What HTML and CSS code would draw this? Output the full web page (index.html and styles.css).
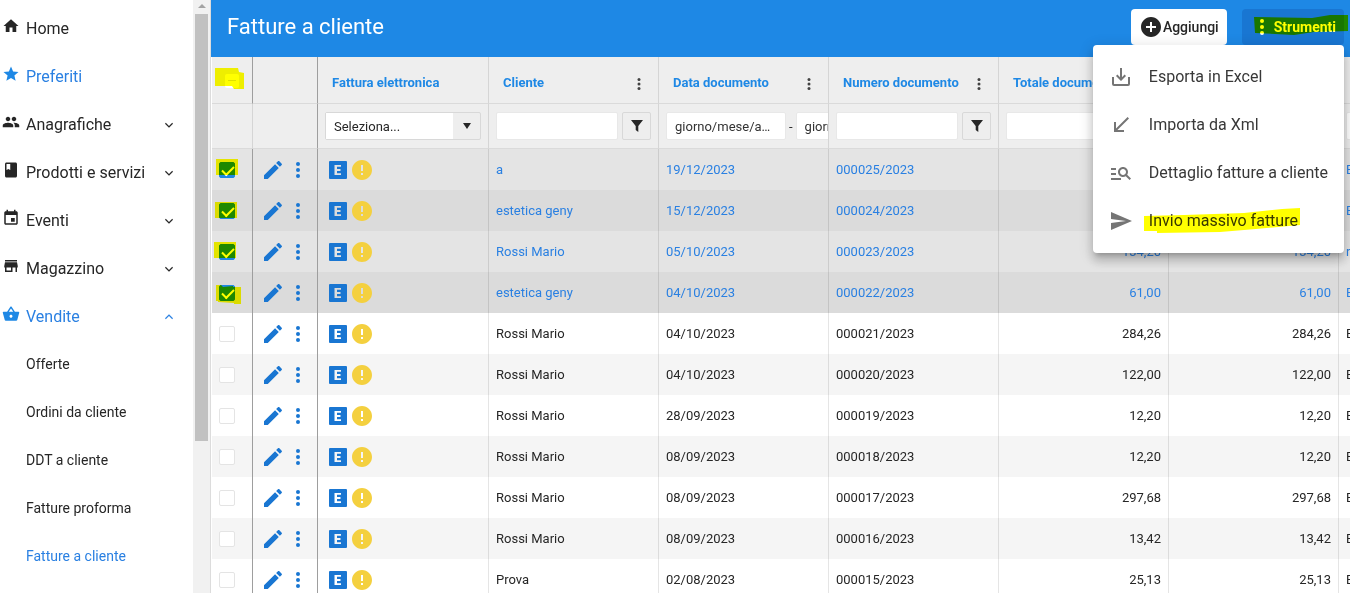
FILE: index.html
```html
<!DOCTYPE html>
<html lang="it">
<head>
<meta charset="utf-8">
<meta name="viewport" content="width=device-width, initial-scale=1">
<title>Fatture a cliente</title>
<link rel="stylesheet" href="styles.css">
</head>
<body>
<svg class="sprite" aria-hidden="true">
  <symbol id="home" viewBox="0 0 24 24"><path d="M10 20v-6h4v6h5v-8h3L12 3 2 12h3v8z"/></symbol>
  <symbol id="star" viewBox="0 0 24 24"><path d="M12 17.27 18.18 21l-1.64-7.03L22 9.24l-7.19-.61L12 2 9.19 8.63 2 9.24l5.46 4.73L5.82 21z"/></symbol>
  <symbol id="people" viewBox="0 0 24 24"><path d="M16 11c1.66 0 2.99-1.34 2.99-3S17.66 5 16 5s-3 1.34-3 3 1.34 3 3 3zm-8 0c1.66 0 2.99-1.34 2.99-3S9.66 5 8 5 5 6.340 5 8s1.340 3 3 3zm0 2c-2.330 0-7 1.170-7 3.500V19h14v-2.500c0-2.330-4.670-3.500-7-3.500zm8 0c-.290 0-.620.020-.970.050 1.160.840 1.970 1.970 1.970 3.450V19h6v-2.500c0-2.330-4.670-3.500-7-3.500z"/></symbol>
  <symbol id="book" viewBox="0 0 24 24"><path d="M18 2H6c-1.100 0-2 .9-2 2v16c0 1.100.9 2 2 2h12c1.100 0 2-.9 2-2V4c0-1.100-.9-2-2-2zM6 4h5v8l-2.500-1.500L6 12V4z"/></symbol>
  <symbol id="event" viewBox="0 0 24 24"><path d="M17 12h-5v5h5v-5zM16 1v2H8V1H6v2H5c-1.110 0-1.990.9-1.990 2L3 19c0 1.100.890 2 2 2h14c1.100 0 2-.9 2-2V5c0-1.100-.9-2-2-2h-1V1h-2zm3 18H5V8h14v11z"/></symbol>
  <symbol id="store" viewBox="0 0 24 24"><path d="M20 4H4v2h16V4zm1 10v-2l-1-5H4l-1 5v2h1v6h10v-6h4v6h2v-6h1zm-9 4H6v-4h6v4z"/></symbol>
  <symbol id="basket" viewBox="0 0 24 24"><path d="M17.210 9l-4.380-6.560c-.190-.280-.510-.420-.830-.420-.320 0-.640.140-.830.430L6.790 9H2c-.550 0-1 .450-1 1 0 .090.010.180.040.270l2.540 9.270c.230.840 1 1.460 1.920 1.460h13c.920 0 1.690-.620 1.930-1.460l2.540-9.270L23 10c0-.550-.450-1-1-1h-4.790zM9 9l3-4.400L15 9H9zm3 8c-1.100 0-2-.9-2-2s.9-2 2-2 2 .9 2 2-.9 2-2 2z"/></symbol>
  <symbol id="down" viewBox="0 0 24 24"><path d="M16.800 8.800 12 13.600 7.200 8.800 6 10l6 6 6-6z"/></symbol>
  <symbol id="up" viewBox="0 0 24 24"><path d="m12 8-6 6 1.200 1.200L12 10.400l4.800 4.800L18 14z"/></symbol>
  <symbol id="edit" viewBox="0 0 24 24"><path d="M3 17.250V21h3.750L17.810 9.940l-3.750-3.750L3 17.250zM20.710 7.040c.390-.390.390-1.020 0-1.410l-2.340-2.340c-.390-.390-1.020-.390-1.410 0l-1.830 1.830 3.750 3.750 1.830-1.830z"/></symbol>
  <symbol id="more" viewBox="0 0 24 24"><circle cx="12" cy="6" r="2"/><circle cx="12" cy="12" r="2"/><circle cx="12" cy="18" r="2"/></symbol>
  <symbol id="einv" viewBox="0 0 24 24"><path fill-rule="evenodd" d="M4 3h16a1 1 0 0 1 1 1v16a1 1 0 0 1-1 1H4a1 1 0 0 1-1-1V4a1 1 0 0 1 1-1zm4.500 4v10H15v-1.800h-4v-2.300h3.500v-1.800H11V8.800h4V7z"/></symbol>
  <symbol id="warn" viewBox="0 0 24 24"><path d="M12 2C6.480 2 2 6.480 2 12s4.480 10 10 10 10-4.480 10-10S17.520 2 12 2zm1 15h-2v-2h2v2zm0-4h-2V7h2v6z"/></symbol>
  <symbol id="add" viewBox="0 0 24 24"><path d="M12 2C6.480 2 2 6.480 2 12s4.480 10 10 10 10-4.480 10-10S17.520 2 12 2zm5 11h-4v4h-2v-4H7v-2h4V7h2v4h4v2z"/></symbol>
  <symbol id="funnel" viewBox="0 0 16 16"><path d="M2 2h12L9.300 8V14L6.700 12V8z"/></symbol>
  <symbol id="export" viewBox="0 0 24 24"><path d="M11 3h2v9.200l2.600-2.600L17 11l-5 5-5-5 1.400-1.400 2.600 2.600zM3 12h2v7h14v-7h2v7a2 2 0 0 1-2 2H5a2 2 0 0 1-2-2z"/></symbol>
  <symbol id="import" viewBox="0 0 24 24"><path d="M20 5.410 18.590 4 7 15.590V9H5v10h10v-2H8.410z"/></symbol>
  <symbol id="detail" viewBox="0 0 24 24"><path d="M7 9H2V7h5v2zm0 3H2v2h5v-2zm13.590 7-3.830-3.830c-.8.520-1.740.830-2.760.830-2.760 0-5-2.240-5-5s2.240-5 5-5 5 2.240 5 5c0 1.020-.310 1.960-.830 2.750L22 17.590 20.590 19zM17 11c0-1.650-1.350-3-3-3s-3 1.350-3 3 1.350 3 3 3 3-1.350 3-3zM2 19h10v-2H2v2z"/></symbol>
  <symbol id="send" viewBox="0 0 24 24"><path d="M2.010 21 23 12 2.010 3 2 10l15 2-15 2z"/></symbol>
</svg>

<div class="app">
  <nav class="sidebar" aria-label="Menu principale">
    <div class="nav-list">
      <a class="nav-item" href="#"><svg class="nav-icon"><use href="#home"/></svg><span>Home</span></a>
      <a class="nav-item active" href="#"><svg class="nav-icon"><use href="#star"/></svg><span>Preferiti</span></a>
      <a class="nav-item" href="#"><svg class="nav-icon"><use href="#people"/></svg><span>Anagrafiche</span><svg class="chevron"><use href="#down"/></svg></a>
      <a class="nav-item" href="#"><svg class="nav-icon"><use href="#book"/></svg><span>Prodotti e servizi</span><svg class="chevron"><use href="#down"/></svg></a>
      <a class="nav-item" href="#"><svg class="nav-icon"><use href="#event"/></svg><span>Eventi</span><svg class="chevron"><use href="#down"/></svg></a>
      <a class="nav-item" href="#"><svg class="nav-icon"><use href="#store"/></svg><span>Magazzino</span><svg class="chevron"><use href="#down"/></svg></a>
      <a class="nav-item active" href="#"><svg class="nav-icon"><use href="#basket"/></svg><span>Vendite</span><svg class="chevron"><use href="#up"/></svg></a>
      <a class="nav-item sub" href="#">Offerte</a>
      <a class="nav-item sub" href="#">Ordini da cliente</a>
      <a class="nav-item sub" href="#">DDT a cliente</a>
      <a class="nav-item sub" href="#">Fatture proforma</a>
      <a class="nav-item sub active" href="#">Fatture a cliente</a>
    </div>
    <div class="scroll-track" aria-hidden="true"><div class="scroll-arrow"></div><div class="scroll-thumb"></div></div>
  </nav>

  <main class="main">
    <header class="topbar">
      <h1>Fatture a cliente</h1>
      <button class="btn btn-add" type="button"><svg class="icon"><use href="#add"/></svg>Aggiungi</button>
      <div class="tools">
        <button class="btn btn-tools" type="button" aria-expanded="true"><svg class="icon"><use href="#more"/></svg>Strumenti</button>
        <svg class="mark mark-tools" viewBox="0 0 94 20"><path d="M0 2 58 3 76 0H94V16L60 17 40 20 1 18z"/></svg>
        <div class="menu" role="menu">
          <button class="menu-item" type="button" role="menuitem"><svg class="icon"><use href="#export"/></svg>Esporta in Excel</button>
          <button class="menu-item" type="button" role="menuitem"><svg class="icon"><use href="#import"/></svg>Importa da Xml</button>
          <button class="menu-item" type="button" role="menuitem"><svg class="icon"><use href="#detail"/></svg>Dettaglio fatture a cliente</button>
          <button class="menu-item" type="button" role="menuitem"><svg class="icon"><use href="#send"/></svg>Invio massivo fatture<svg class="mark mark-send" viewBox="0 0 156 25"><path d="M0 8 40 7 100 5 138 1 156 0V17L112 21 76 24 13 25V23H0z"/></svg></button>
        </div>
      </div>
    </header>

    <div class="grid-wrap">
      <table class="grid">
        <colgroup><col class="c-check"><col class="c-actions"><col class="c-einv"><col class="c-data"><col class="c-data"><col class="c-data"><col class="c-data"><col class="c-data"><col class="c-data"></colgroup>
        <thead>
          <tr class="titles">
            <th class="strong"><span class="check-all"><input type="checkbox" class="check partial" aria-label="Seleziona tutto"><svg class="mark mark-all" viewBox="0 0 29 21"><path d="M0 0H23L24 4 29 5V21H19L17 18H0z"/></svg></span></th>
            <th class="strong"></th>
            <th><div class="head">Fattura elettronica</div></th>
            <th><div class="head">Cliente<button class="head-menu" type="button" aria-label="Opzioni Cliente"><svg><use href="#more"/></svg></button></div></th>
            <th><div class="head">Data documento<button class="head-menu" type="button" aria-label="Opzioni Data documento"><svg><use href="#more"/></svg></button></div></th>
            <th><div class="head">Numero documento<button class="head-menu" type="button" aria-label="Opzioni Numero documento"><svg><use href="#more"/></svg></button></div></th>
            <th><div class="head">Totale documento</div></th>
            <th></th>
            <th></th>
          </tr>
          <tr class="filters">
            <td></td>
            <td class="strong"></td>
            <td><div class="select-box"><select aria-label="Fattura elettronica"><option>Seleziona...</option></select><span class="arrow"></span></div></td>
            <td><div class="filter"><input type="text" aria-label="Cliente"><button type="button" aria-label="Filtra Cliente"><svg><use href="#funnel"/></svg></button></div></td>
            <td><div class="filter dates"><input type="text" placeholder="giorno/mese/anno" aria-label="Dal"><span>-</span><input type="text" placeholder="giorno/mese/anno" aria-label="Al"></div></td>
            <td><div class="filter"><input type="text" aria-label="Numero documento"><button type="button" aria-label="Filtra Numero documento"><svg><use href="#funnel"/></svg></button></div></td>
            <td><div class="filter"><input type="text" aria-label="Totale documento"></div></td>
            <td></td>
            <td><div class="filter"><input type="text" aria-label="Filtro"></div></td>
          </tr>
        </thead>
        <tbody>
          <tr class="selected"><td><span class="check-cell"><input type="checkbox" class="check" checked aria-label="Seleziona 000025/2023"><svg class="mark mark-row" viewBox="0 0 28 24"><path d="M3 3H25V19H3z"/></svg></span></td><td><div class="icons"><svg><use href="#edit"/></svg><svg class="dots"><use href="#more"/></svg></div></td><td><div class="icons status"><svg><use href="#einv"/></svg><svg class="warn"><use href="#warn"/></svg></div></td><td>a</td><td>19/12/2023</td><td>000025/2023</td><td class="num"></td><td class="num"></td><td>E</td></tr>
          <tr class="selected"><td><span class="check-cell"><input type="checkbox" class="check" checked aria-label="Seleziona 000024/2023"><svg class="mark mark-row" viewBox="0 0 28 24"><path d="M2 5H24V21H2z"/></svg></span></td><td><div class="icons"><svg><use href="#edit"/></svg><svg class="dots"><use href="#more"/></svg></div></td><td><div class="icons status"><svg><use href="#einv"/></svg><svg class="warn"><use href="#warn"/></svg></div></td><td>estetica geny</td><td>15/12/2023</td><td>000024/2023</td><td class="num"></td><td class="num"></td><td>E</td></tr>
          <tr class="selected"><td><span class="check-cell"><input type="checkbox" class="check" checked aria-label="Seleziona 000023/2023"><svg class="mark mark-row" viewBox="0 0 28 24"><path d="M1 4H23V20H1z"/></svg></span></td><td><div class="icons"><svg><use href="#edit"/></svg><svg class="dots"><use href="#more"/></svg></div></td><td><div class="icons status"><svg><use href="#einv"/></svg><svg class="warn"><use href="#warn"/></svg></div></td><td>Rossi Mario</td><td>05/10/2023</td><td>000023/2023</td><td class="num">134,20</td><td class="num">134,20</td><td>r</td></tr>
          <tr class="selected"><td><span class="check-cell"><input type="checkbox" class="check" checked aria-label="Seleziona 000022/2023"><svg class="mark mark-row" viewBox="0 0 28 24"><path d="M3 6H8L10 8 20 7V8H28V25H21V24L5 23V22H3z"/></svg></span></td><td><div class="icons"><svg><use href="#edit"/></svg><svg class="dots"><use href="#more"/></svg></div></td><td><div class="icons status"><svg><use href="#einv"/></svg><svg class="warn"><use href="#warn"/></svg></div></td><td>estetica geny</td><td>04/10/2023</td><td>000022/2023</td><td class="num">61,00</td><td class="num">61,00</td><td>E</td></tr>
          <tr><td><span class="check-cell"><input type="checkbox" class="check" aria-label="Seleziona 000021/2023"></span></td><td><div class="icons"><svg><use href="#edit"/></svg><svg class="dots"><use href="#more"/></svg></div></td><td><div class="icons status"><svg><use href="#einv"/></svg><svg class="warn"><use href="#warn"/></svg></div></td><td>Rossi Mario</td><td>04/10/2023</td><td>000021/2023</td><td class="num">284,26</td><td class="num">284,26</td><td>E</td></tr>
          <tr><td><span class="check-cell"><input type="checkbox" class="check" aria-label="Seleziona 000020/2023"></span></td><td><div class="icons"><svg><use href="#edit"/></svg><svg class="dots"><use href="#more"/></svg></div></td><td><div class="icons status"><svg><use href="#einv"/></svg><svg class="warn"><use href="#warn"/></svg></div></td><td>Rossi Mario</td><td>04/10/2023</td><td>000020/2023</td><td class="num">122,00</td><td class="num">122,00</td><td>E</td></tr>
          <tr><td><span class="check-cell"><input type="checkbox" class="check" aria-label="Seleziona 000019/2023"></span></td><td><div class="icons"><svg><use href="#edit"/></svg><svg class="dots"><use href="#more"/></svg></div></td><td><div class="icons status"><svg><use href="#einv"/></svg><svg class="warn"><use href="#warn"/></svg></div></td><td>Rossi Mario</td><td>28/09/2023</td><td>000019/2023</td><td class="num">12,20</td><td class="num">12,20</td><td>E</td></tr>
          <tr><td><span class="check-cell"><input type="checkbox" class="check" aria-label="Seleziona 000018/2023"></span></td><td><div class="icons"><svg><use href="#edit"/></svg><svg class="dots"><use href="#more"/></svg></div></td><td><div class="icons status"><svg><use href="#einv"/></svg><svg class="warn"><use href="#warn"/></svg></div></td><td>Rossi Mario</td><td>08/09/2023</td><td>000018/2023</td><td class="num">12,20</td><td class="num">12,20</td><td>E</td></tr>
          <tr><td><span class="check-cell"><input type="checkbox" class="check" aria-label="Seleziona 000017/2023"></span></td><td><div class="icons"><svg><use href="#edit"/></svg><svg class="dots"><use href="#more"/></svg></div></td><td><div class="icons status"><svg><use href="#einv"/></svg><svg class="warn"><use href="#warn"/></svg></div></td><td>Rossi Mario</td><td>08/09/2023</td><td>000017/2023</td><td class="num">297,68</td><td class="num">297,68</td><td>E</td></tr>
          <tr><td><span class="check-cell"><input type="checkbox" class="check" aria-label="Seleziona 000016/2023"></span></td><td><div class="icons"><svg><use href="#edit"/></svg><svg class="dots"><use href="#more"/></svg></div></td><td><div class="icons status"><svg><use href="#einv"/></svg><svg class="warn"><use href="#warn"/></svg></div></td><td>Rossi Mario</td><td>08/09/2023</td><td>000016/2023</td><td class="num">13,42</td><td class="num">13,42</td><td>E</td></tr>
          <tr><td><span class="check-cell"><input type="checkbox" class="check" aria-label="Seleziona 000015/2023"></span></td><td><div class="icons"><svg><use href="#edit"/></svg><svg class="dots"><use href="#more"/></svg></div></td><td><div class="icons status"><svg><use href="#einv"/></svg><svg class="warn"><use href="#warn"/></svg></div></td><td>Prova</td><td>02/08/2023</td><td>000015/2023</td><td class="num">25,13</td><td class="num">25,13</td><td>E</td></tr>
        </tbody>
      </table>
    </div>
  </main>
</div>
</body>
</html>
```
FILE: styles.css
```css
:root {
  --blue: #1e88e5;
  --blue-dark: #1976d2;
  --link: #2a80e2;
  --ink: #262626;
  --line: #dadada;
}

* { box-sizing: border-box; }

body {
  margin: 0;
  font-family: Roboto, "Liberation Sans", sans-serif;
  font-size: 13px;
  color: var(--ink);
  background: #fff;
}

button, input, select { font: inherit; color: inherit; }
button { border: 0; padding: 0; background: none; cursor: pointer; }
svg { fill: currentColor; flex: none; }
.sprite { display: none; }
.icon { width: 24px; height: 24px; }

.app { display: flex; height: 100vh; overflow: hidden; }

/* Sidebar */
.sidebar { display: flex; flex: none; width: 211px; border-right: 1px solid #dcdcdc; }
.nav-list { flex: 1; padding-top: 4px; overflow: hidden; }
.nav-item {
  display: flex;
  align-items: center;
  gap: 6px;
  height: 48px;
  padding: 0 16px 0 2px;
  font-size: 16px;
  color: var(--ink);
  text-decoration: none;
}
.nav-item.active { color: var(--link); }
.nav-item.active .nav-icon { color: var(--blue); }
.nav-item.sub { padding-left: 26px; font-size: 14px; }
.nav-icon { width: 18px; height: 18px; margin-bottom: 4px; }
.chevron { width: 16px; height: 16px; margin-left: auto; margin-top: 2px; }

.scroll-track {
  display: flex;
  flex-direction: column;
  align-items: center;
  width: 17px;
  background: #f1f1f1;
}
.scroll-arrow {
  width: 0;
  margin: 4px 0 6px;
  border: 4px solid transparent;
  border-top: 0;
  border-bottom-color: #a3a3a3;
}
.scroll-thumb { width: 13px; height: 72%; background: #c1c1c1; }

/* Top bar */
.main { display: flex; flex-direction: column; flex: 1; min-width: 0; }
.topbar {
  display: flex;
  align-items: center;
  flex: none;
  height: 57px;
  padding: 0 6px 3px 16px;
  background: var(--blue);
}
h1 { flex: 1; margin: 0; padding-bottom: 1px; font-size: 22px; font-weight: 400; color: #fff; }
.btn {
  display: flex;
  align-items: center;
  height: 36px;
  border-radius: 4px;
  font-size: 14px;
}
.btn-add { padding: 0 8px; background: #fff; font-weight: 500; }
.tools { position: relative; margin-left: 15px; }
.btn-tools { padding: 0 8px; background: var(--blue-dark); color: #fff; font-weight: 700; }
.btn-add, .btn-tools { padding-bottom: 1px; }

.menu {
  position: absolute;
  top: 100%;
  right: 0;
  z-index: 2;
  padding: 7px 0 9px;
  border-radius: 4px;
  background: #fff;
  box-shadow: 0 5px 5px -3px rgba(0,0,0,.2), 0 8px 10px 1px rgba(0,0,0,.14), 0 3px 14px 2px rgba(0,0,0,.12);
}
.menu-item {
  display: flex;
  position: relative;
  align-items: center;
  gap: 16px;
  width: 100%;
  height: 48px;
  padding: 0 16px;
  font-size: 16px;
  white-space: nowrap;
  color: #383838;
}
.menu-item .icon { margin-top: 2px; color: #757575; }

/* Highlighter strokes lying over the content */
.mark { position: absolute; fill: #ff0; mix-blend-mode: multiply; pointer-events: none; overflow: visible; }
.mark-tools { top: 6px; left: 12px; width: 94px; height: 20px; }
.mark-send { top: 12px; left: 51px; width: 156px; height: 25px; }
.mark-all { top: -6px; left: -10px; width: 29px; height: 21px; }
.mark-row { top: -6px; left: -6px; width: 28px; height: 24px; }

/* Grid */
.grid-wrap { flex: 1; overflow: hidden; padding-left: 1px; }
.grid { width: 1297px; table-layout: fixed; border-collapse: separate; border-spacing: 0; }
.c-check { width: 41px; }
.c-actions { width: 65px; }
.c-einv { width: 171px; }
.c-data { width: 170px; }

th, td {
  padding: 0 7px;
  border-right: 1px solid rgba(0,0,0,.1);
  text-align: left;
  overflow: hidden;
  white-space: nowrap;
}
thead th, thead td { background: #eee; border-bottom: 1px solid var(--line); }
.titles th { height: 47px; padding: 4px 0 0 14px; }
.titles th:first-child { padding: 2px 0 0; }
thead .strong, tbody td:nth-child(-n+2) { border-right-color: #9e9e9e; }
.filters td { height: 45px; }
tbody td { height: 41px; }
tbody tr:nth-child(even) { background: #f5f5f5; }
tbody .selected { background: #e4e4e4; color: var(--link); }
tbody .selected:nth-child(even) { background: #dbdbdb; }
.num { text-align: right; }

.head { display: flex; align-items: center; justify-content: space-between; height: 18px; padding-right: 10px; color: var(--blue); font-weight: 700; }
.head-menu { display: flex; padding-top: 4px; color: #424242; }
.head-menu svg { width: 18px; height: 18px; }

.icons { display: flex; gap: 1px; padding-left: 1px; color: var(--blue-dark); }
.icons svg { width: 24px; height: 24px; }
.status { gap: 0; }
.status .warn { color: #f4d03f; }

.check {
  display: block;
  appearance: none;
  width: 16px;
  height: 16px;
  margin: 0;
  border: 1px solid #e4e4e4;
  border-radius: 2px;
  background: #fff;
}
.check-cell, .check-all { display: block; position: relative; width: 16px; }
.check-all { width: 14px; margin: 0 auto; }
.check:checked { border-color: var(--blue); background: var(--blue); }
.check:checked::after {
  content: "";
  display: block;
  width: 10px;
  height: 5px;
  margin: 3px 0 0 2px;
  border: solid #fff;
  border-width: 0 0 2px 2px;
  rotate: -45deg;
}
.check.partial { width: 14px; height: 14px; border: 0; }
.partial::after { content: ""; display: block; width: 8px; height: 1px; margin: 0 3px; background: #e0e0e0; translate: 0 6px; }

.filter { display: flex; align-items: center; gap: 4px; }
.filter input {
  flex: none;
  width: 122px;
  height: 28px;
  padding: 0 8px;
  border: 1px solid #e8e8e8;
  border-radius: 2px;
  background: #fff;
  text-overflow: ellipsis;
}
.filter input::placeholder { color: #333; opacity: 1; }
.filter button {
  display: grid;
  place-items: center;
  width: 29px;
  height: 28px;
  border: 1px solid #d8d8d8;
  border-radius: 2px;
}
.filter button svg { width: 16px; height: 16px; }
.dates { gap: 3px; margin-right: -7px; overflow: hidden; }
.dates input { width: 120px; }

.select-box {
  display: flex;
  width: 156px;
  height: 28px;
  border: 1px solid #d8d8d8;
  border-radius: 2px;
}
.select-box select { flex: 1; min-width: 0; padding: 0 8px; border: 0; appearance: none; background: #fff; }
.arrow { display: grid; place-items: center; width: 27px; }
.arrow::after { content: ""; border: 4px solid transparent; border-top: 6px solid var(--ink); border-bottom: 0; }
```
